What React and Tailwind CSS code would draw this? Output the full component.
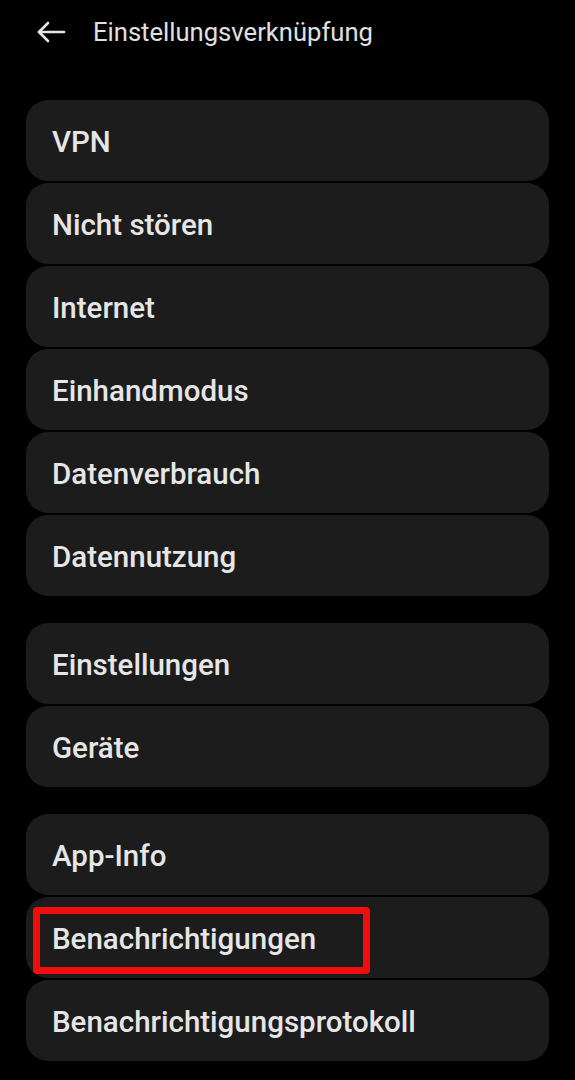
import React from 'react';

const groups = [
  ['VPN', 'Nicht stören', 'Internet', 'Einhandmodus', 'Datenverbrauch', 'Datennutzung'],
  ['Einstellungen', 'Geräte'],
  ['App-Info', 'Benachrichtigungen', 'Benachrichtigungsprotokoll'],
];

const BackArrow = () => (
  <svg width="30" height="24" viewBox="0 0 30 24" fill="none" stroke="#e6e6e6" strokeWidth="2.6" strokeLinecap="round" strokeLinejoin="round">
    <path d="M28 12H3" />
    <path d="M12 3L3 12l9 9" />
  </svg>
);

const Row = ({ label, marked }) => (
  <div className="h-[81px] rounded-[22px] bg-[#1c1c1c] flex items-center pl-[26px] pt-[4px]">
    {marked ? (
      <span className="-ml-[19px] mt-[2px] h-[67px] flex items-center pl-[12px] pr-[47px] pb-[3px] border-[7px] border-[#f20d0d] rounded-[4px]">
        {label}
      </span>
    ) : (
      <span>{label}</span>
    )}
  </div>
);

export default function App() {
  return (
    <div className="min-h-screen bg-black text-[#e6e6e6] font-['Roboto',sans-serif] pb-[18px]">
      <header className="h-[64px] flex items-center pl-[36px] gap-[27px]">
        <BackArrow />
        <h1 className="text-[25.6px] text-[#e0e0e0]">Einstellungsverknüpfung</h1>
      </header>
      <div className="px-[26px] pt-[36px] flex flex-col gap-[27px] text-[29.5px] font-medium">
        {groups.map((items, gi) => (
          <div key={gi} className="flex flex-col gap-[2px]">
            {items.map((label) => (
              <Row key={label} label={label} marked={label === 'Benachrichtigungen'} />
            ))}
          </div>
        ))}
      </div>
    </div>
  );
}
